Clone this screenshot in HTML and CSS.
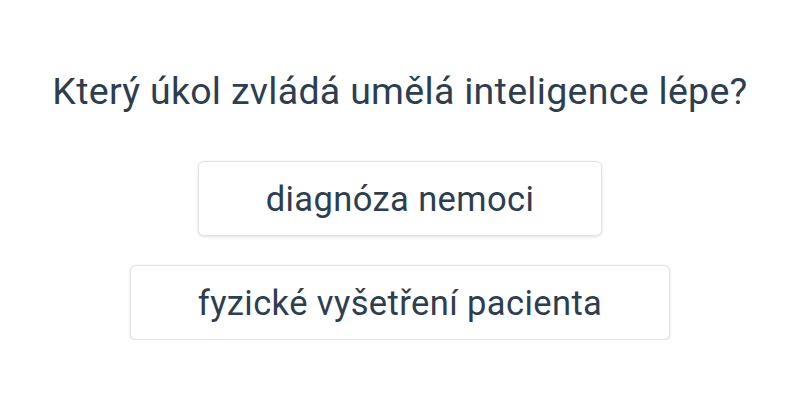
FILE: index.html
```html
<!DOCTYPE html>
<html lang="cs">
<head>
    <meta charset="UTF-8">
    <title>Kvíz</title>
    <link rel="stylesheet" href="styles.css">
</head>
<body>
    <div class="quiz">
        <h1 class="question">Který úkol zvládá umělá inteligence lépe?</h1>
        <div class="answers">
            <button class="answer">diagnóza nemoci</button>
            <button class="answer">fyzické vyšetření pacienta</button>
        </div>
    </div>
</body>
</html>
```

FILE: styles.css
```css
body {
    margin: 0;
    font-family: Roboto, "Liberation Sans", sans-serif;
    color: #2c3e50;
    background: #fff;
}
.quiz {
    display: flex;
    flex-direction: column;
    align-items: center;
    padding-top: 67px;
}
.question {
    margin: 0;
    font-size: 37.5px;
    font-weight: 400;
    letter-spacing: 0.3px;
    line-height: 48px;
}
.answers {
    display: flex;
    flex-direction: column;
    align-items: center;
    gap: 29px;
    margin-top: 46px;
}
.answer {
    font-family: inherit;
    font-size: 34.5px;
    letter-spacing: 0.4px;
    color: #2c3e50;
    background: #fff;
    border: 1px solid #e3e3e3;
    border-radius: 6px;
    padding: 0 67px;
    height: 75px;
    box-shadow: 0 1px 3px rgba(0, 0, 0, 0.12);
    cursor: pointer;
}
```
